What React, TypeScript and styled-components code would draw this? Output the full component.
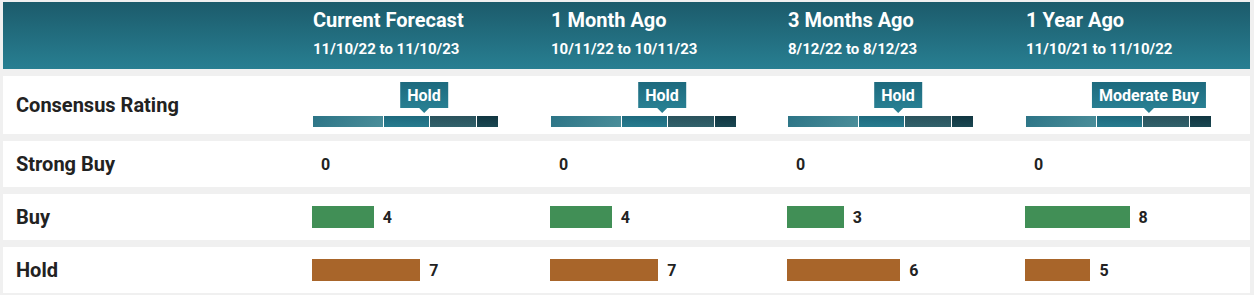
import React from "react";
import styled, { createGlobalStyle } from "styled-components";

const GlobalStyle = createGlobalStyle`
  html, body {
    margin: 0;
    padding: 0;
    background: #f0f0f0;
    font-family: Roboto, "Liberation Sans", Arial, sans-serif;
  }
`;

const COLS = "309px 238px 237px 238px 1fr";

const Wrapper = styled.div`
  width: 1247px;
  margin-left: 3px;
  padding-top: 2px;
  display: flex;
  flex-direction: column;
  gap: 7px;
`;

const Header = styled.div`
  display: grid;
  grid-template-columns: ${COLS};
  height: 67px;
  background: linear-gradient(to bottom, #1c5b6b 0%, #287f92 100%);
  color: #ffffff;
`;

const HeaderCell = styled.div`
  display: flex;
  flex-direction: column;
  padding: 6px 0 0 1px;
`;

const Title = styled.div`
  font-size: 20px;
  font-weight: 700;
  line-height: 24px;
  white-space: nowrap;
`;

const Dates = styled.div`
  font-size: 15px;
  font-weight: 700;
  line-height: 18px;
  margin-top: 8px;
  white-space: nowrap;
`;

const Row = styled.div<{ $h: number }>`
  display: grid;
  grid-template-columns: ${COLS};
  height: ${(p) => p.$h}px;
  background: #ffffff;
  align-items: center;
`;

const Label = styled.div`
  padding-left: 13px;
  font-size: 20px;
  font-weight: 700;
  color: #222222;
  white-space: nowrap;
`;

const RatingCell = styled.div`
  position: relative;
  align-self: stretch;
  padding-top: 40px;
  box-sizing: border-box;
`;

const Scale = styled.div`
  display: flex;
  gap: 1px;
  height: 11px;
  padding-left: 1px;
`;

const Segment = styled.div<{ $w: number; $bg: string }>`
  width: ${(p) => p.$w}px;
  height: 100%;
  background: ${(p) => p.$bg};
`;

const Tip = styled.div`
  position: absolute;
  top: 6px;
  transform: translateX(-50%);
  height: 26px;
  padding: 0 7px;
  display: flex;
  align-items: center;
  background: linear-gradient(to bottom, #1d6a7e 0%, #287f92 100%);
  color: #ffffff;
  font-size: 16px;
  font-weight: 700;
  white-space: nowrap;
  &::after {
    content: "";
    position: absolute;
    left: 50%;
    bottom: -5px;
    margin-left: -5px;
    border-left: 5px solid transparent;
    border-right: 5px solid transparent;
    border-top: 5px solid #287f92;
  }
`;

const CountCell = styled.div`
  display: flex;
  align-items: center;
`;

const Bar = styled.div<{ $color: string }>`
  height: 22px;
  background: ${(p) => p.$color};
`;

const Count = styled.span`
  margin-left: 9px;
  font-size: 16px;
  font-weight: 700;
  color: #222222;
`;

const SEGMENTS = [
  { w: 70, bg: "linear-gradient(135deg, #2c7486 0%, #4b8e9a 100%)" },
  { w: 45, bg: "linear-gradient(to bottom, #1e6a7e 0%, #277b8e 100%)" },
  { w: 46, bg: "linear-gradient(to bottom, #2a525c 0%, #31616b 100%)" },
  { w: 21, bg: "linear-gradient(to bottom, #113641 0%, #1a4752 100%)" },
];

const columns = [
  { title: "Current Forecast", dates: "11/10/22 to 11/10/23", rating: "Hold", pos: 112, strong: 0, buy: 4, hold: 7 },
  { title: "1 Month Ago", dates: "10/11/22 to 10/11/23", rating: "Hold", pos: 112, strong: 0, buy: 4, hold: 7 },
  { title: "3 Months Ago", dates: "8/12/22 to 8/12/23", rating: "Hold", pos: 111, strong: 0, buy: 3, hold: 6 },
  { title: "1 Year Ago", dates: "11/10/21 to 11/10/22", rating: "Moderate Buy", pos: 124, strong: 0, buy: 8, hold: 5 },
];

const FULL = 170;

const CountRow: React.FC<{ label: string; field: "strong" | "buy" | "hold"; color: string }> = ({ label, field, color }) => (
  <Row $h={46}>
    <Label>{label}</Label>
    {columns.map((c) => {
      const total = c.strong + c.buy + c.hold;
      const w = (c[field] / total) * FULL;
      return (
        <CountCell key={c.title}>
          <Bar $color={color} style={{ width: `${w}px` }} />
          <Count>{c[field]}</Count>
        </CountCell>
      );
    })}
  </Row>
);

export default function App() {
  return (
    <>
      <GlobalStyle />
      <Wrapper>
        <Header>
          <div />
          {columns.map((c) => (
            <HeaderCell key={c.title}>
              <Title>{c.title}</Title>
              <Dates>{c.dates}</Dates>
            </HeaderCell>
          ))}
        </Header>
        <Row $h={58}>
          <Label>Consensus Rating</Label>
          {columns.map((c) => (
            <RatingCell key={c.title}>
              <Tip style={{ left: `${c.pos}px` }}>{c.rating}</Tip>
              <Scale>
                {SEGMENTS.map((s, i) => (
                  <Segment key={i} $w={s.w} $bg={s.bg} />
                ))}
              </Scale>
            </RatingCell>
          ))}
        </Row>
        <CountRow label="Strong Buy" field="strong" color="#418f56" />
        <CountRow label="Buy" field="buy" color="#418f56" />
        <CountRow label="Hold" field="hold" color="#a8652a" />
      </Wrapper>
    </>
  );
}
